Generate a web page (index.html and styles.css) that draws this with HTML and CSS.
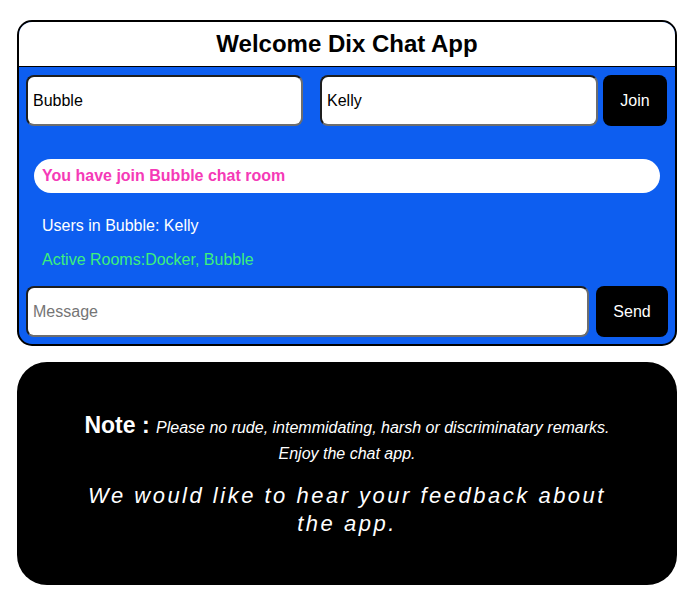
FILE: index.html
```html
<!DOCTYPE html>
<html>
<head>
<meta charset="utf-8">
<link rel="stylesheet" href="styles.css">
</head>
<body>
  <div class="chat-card">
    <div class="chat-header">Welcome Dix Chat App</div>
    <div class="chat-body">
      <div class="join-row">
        <input class="field room-field" type="text" value="Bubble">
        <input class="field name-field" type="text" value="Kelly">
        <button class="btn join-btn">Join</button>
      </div>
      <div class="status">You have join Bubble chat room</div>
      <div class="users">Users in Bubble: Kelly</div>
      <div class="rooms">Active Rooms:Docker, Bubble</div>
      <div class="send-row">
        <input class="field message-field" type="text" placeholder="Message">
        <button class="btn send-btn">Send</button>
      </div>
    </div>
  </div>
  <div class="note-card">
    <p class="note-line"><span class="note-label">Note : </span><span class="note-text">Please no rude, intemmidating, harsh or discriminatary remarks.</span></p>
    <p class="enjoy">Enjoy the chat app.</p>
    <p class="feedback">We would like to hear your feedback about the app.</p>
  </div>
</body>
</html>
```
FILE: styles.css
```css
* { box-sizing: border-box; }
html, body { margin: 0; padding: 0; background: #ffffff; }
body {
  font-family: "Liberation Sans", Arial, sans-serif;
  padding: 20px 19px 0 17px;
}
.chat-card {
  width: 660px;
  border: 2px solid #000;
  border-radius: 15px;
  overflow: hidden;
  background: #0d5ef0;
}
.chat-header {
  background: #fff;
  height: 45px;
  border-bottom: 1px solid #000;
  text-align: center;
  font-weight: bold;
  font-size: 24px;
  line-height: 44px;
  color: #000;
}
.chat-body {
  padding: 8px 7px 7px 7px;
}
.join-row, .send-row {
  display: flex;
  align-items: stretch;
}
.join-row { margin-right: 1px; }
.field {
  height: 51px;
  border-style: solid;
  border-width: 2px;
  border-color: #1e1e1e #6e6e6e #6e6e6e #1e1e1e;
  border-radius: 8px;
  background: #fff;
  font-family: "Liberation Sans", Arial, sans-serif;
  font-size: 16px;
  color: #000;
  padding: 0 5px;
  outline: none;
}
.field::placeholder { color: #757575; }
.room-field { width: 277px; }
.name-field { width: 278px; margin-left: 17px; }
.btn {
  background: #000;
  color: #fff;
  border: none;
  border-radius: 8px;
  font-family: "Liberation Sans", Arial, sans-serif;
  font-size: 16px;
  height: 51px;
  padding: 0;
}
.join-btn { width: 64px; margin-left: 5px; }
.status {
  margin: 33px 8px 0 8px;
  height: 34px;
  background: #fff;
  border-radius: 17px;
  color: #f53ab7;
  font-weight: bold;
  font-size: 16px;
  line-height: 34px;
  padding-left: 8px;
}
.users {
  margin-top: 24px;
  padding-left: 16px;
  color: #fff;
  font-size: 16px;
  line-height: 18px;
}
.rooms {
  margin-top: 16px;
  padding-left: 16px;
  color: #3df07b;
  font-size: 16px;
  line-height: 18px;
}
.send-row { margin-top: 17px; }
.message-field { width: 563px; }
.send-btn { width: 72px; margin-left: 7px; }
.note-card {
  width: 660px;
  height: 223px;
  margin-top: 16px;
  background: #000;
  border-radius: 30px;
  color: #fff;
  text-align: center;
  padding: 50px 60px 0 60px;
}
.note-card p { margin: 0; }
.note-line { line-height: 26px; }
.note-label { font-weight: bold; font-size: 23px; }
.note-text { font-style: italic; font-size: 16px; }
.enjoy { font-style: italic; font-size: 16px; line-height: 26px; margin-top: 0; }
.feedback {
  margin-top: 15px !important;
  font-style: italic;
  font-size: 22px;
  letter-spacing: 2.5px;
  line-height: 28px;
}
```
